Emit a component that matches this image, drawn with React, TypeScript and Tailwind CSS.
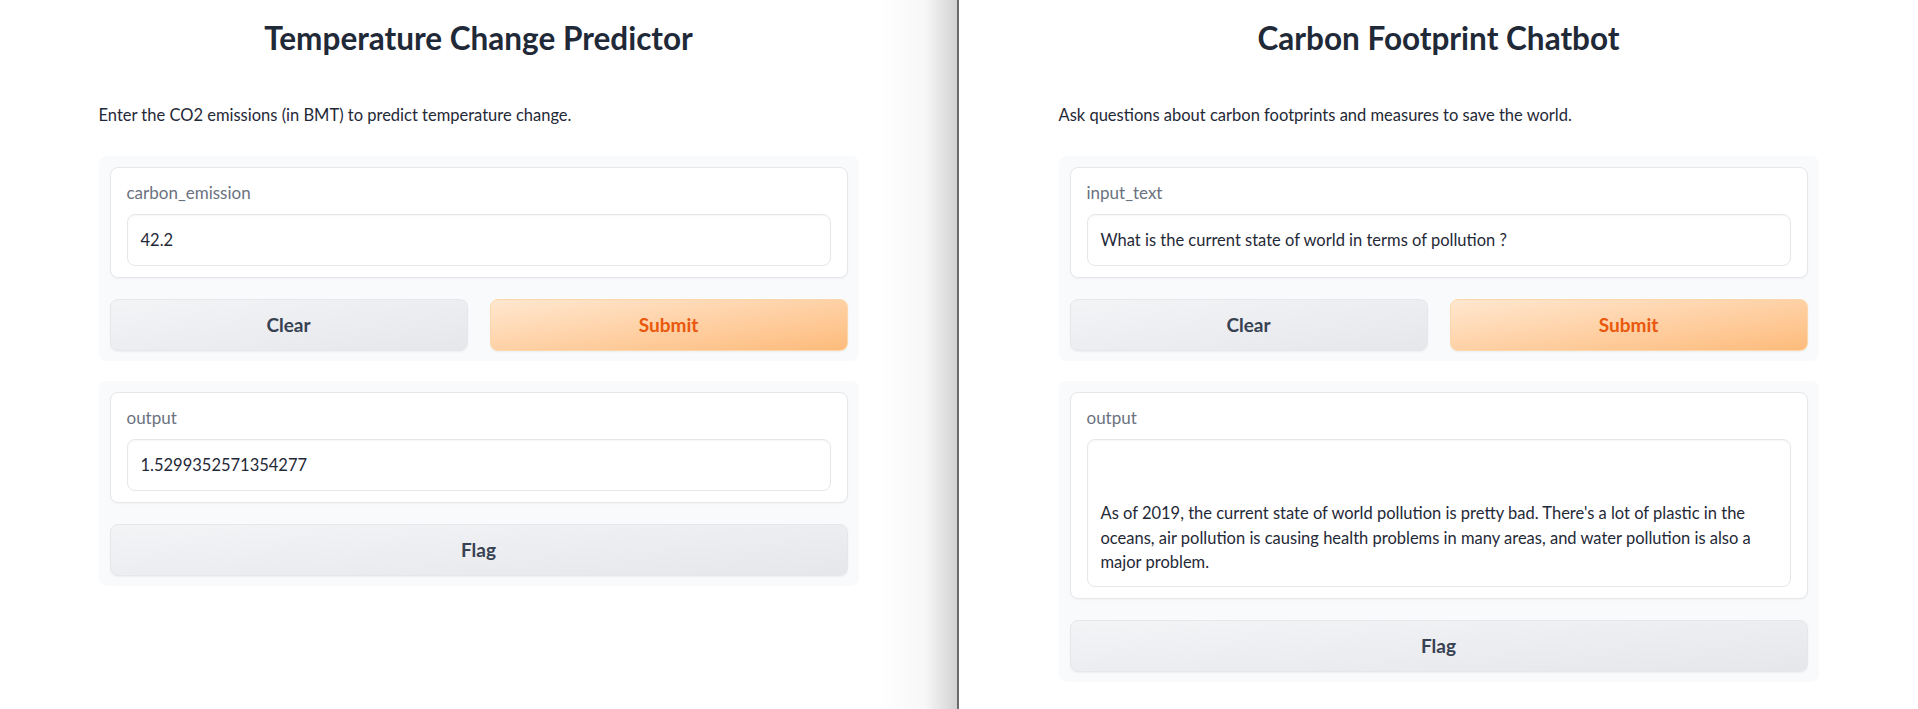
import type { ReactNode } from 'react';

const answer =
  "\n\nAs of 2019, the current state of world pollution is pretty bad. There's a lot of plastic in the oceans, air pollution is causing health problems in many areas, and water pollution is also a major problem.";

function Card({ label, children }: { label: string; children: ReactNode }) {
  return (
    <div className="rounded-lg border border-[#e5e7eb] bg-white px-4 pt-[15px] pb-[11px] shadow-[0_1px_2px_rgba(0,0,0,0.04)]">
      <div className="h-5 text-[17px] leading-5 text-[#6b7280]">{label}</div>
      <div className="mt-[11px]">{children}</div>
    </div>
  );
}

function Field({ value }: { value: string }) {
  return (
    <div className="flex h-[52px] items-center rounded-lg border border-[#e5e7eb] bg-white px-[13px] text-[16.5px] text-[#1f2937] shadow-[inset_0_1px_2px_rgba(0,0,0,0.04)]">
      {value}
    </div>
  );
}

function Button({ label, primary }: { label: string; primary?: boolean }) {
  return (
    <button
      type="button"
      className={
        primary
          ? 'h-[52px] flex-1 rounded-lg border border-[#fed7aa] bg-gradient-to-br from-[#ffe7cf] to-[#fdbb7b] text-[19px] font-bold text-[#ea580c] shadow-[0_1px_2px_rgba(0,0,0,0.05)]'
          : 'h-[52px] flex-1 rounded-lg border border-[#e5e7eb] bg-gradient-to-br from-[#f3f4f6] to-[#e5e7eb] text-[19px] font-bold text-[#374151] shadow-[0_1px_2px_rgba(0,0,0,0.05)]'
      }
    >
      {label}
    </button>
  );
}

function Group({ children }: { children: ReactNode }) {
  return (
    <div className="flex flex-col gap-[21px] rounded-lg bg-[#f9fafb] px-[11px] pt-[11px] pb-[10px]">
      {children}
    </div>
  );
}

function Panel({
  title,
  description,
  children,
}: {
  title: string;
  description: string;
  children: ReactNode;
}) {
  return (
    <div className="mx-auto w-[760px]">
      <h1 className="flex h-[78px] items-center justify-center text-[31.5px] font-bold text-[#1f2937]">
        {title}
      </h1>
      <p className="mt-[25px] h-6 text-[16.5px] leading-6 text-[#1f2937]">{description}</p>
      <div className="mt-[29px] flex flex-col gap-5">{children}</div>
    </div>
  );
}

export default function App() {
  return (
    <div className="flex h-[709px] w-full overflow-hidden bg-white font-[family-name:Lato,sans-serif]">
      <div className="w-[959px] shrink-0 border-r-2 border-[#6b6b6b] bg-[linear-gradient(to_right,#ffffff_0px,#ffffff_880px,#f7f7f7_925px,#d2d2d2_957px)]">
        <Panel
          title="Temperature Change Predictor"
          description="Enter the CO2 emissions (in BMT) to predict temperature change."
        >
          <Group>
            <Card label="carbon_emission">
              <Field value="42.2" />
            </Card>
            <div className="flex gap-[22px]">
              <Button label="Clear" />
              <Button label="Submit" primary />
            </div>
          </Group>
          <Group>
            <Card label="output">
              <Field value="1.5299352571354277" />
            </Card>
            <div className="flex">
              <Button label="Flag" />
            </div>
          </Group>
        </Panel>
      </div>
      <div className="flex-1">
        <Panel
          title="Carbon Footprint Chatbot"
          description="Ask questions about carbon footprints and measures to save the world."
        >
          <Group>
            <Card label="input_text">
              <Field value="What is the current state of world in terms of pollution ?" />
            </Card>
            <div className="flex gap-[22px]">
              <Button label="Clear" />
              <Button label="Submit" primary />
            </div>
          </Group>
          <Group>
            <Card label="output">
              <div className="h-[148px] whitespace-pre-wrap rounded-lg border border-[#e5e7eb] bg-white px-[13px] pt-3 text-[16.5px] leading-[24.5px] text-[#1f2937] shadow-[inset_0_1px_2px_rgba(0,0,0,0.04)]">
                {answer}
              </div>
            </Card>
            <div className="flex">
              <Button label="Flag" />
            </div>
          </Group>
        </Panel>
      </div>
    </div>
  );
}
